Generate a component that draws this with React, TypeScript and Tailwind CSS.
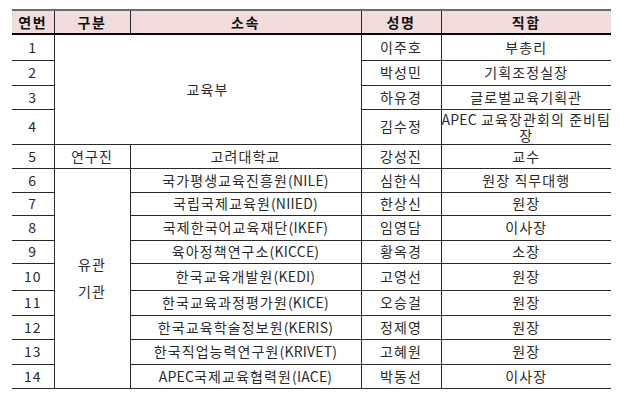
const font = { fontFamily: '"Malgun Gothic", "Noto Sans CJK KR", "Noto Sans", sans-serif' };

// latin pieces keep normal spacing, hangul gets the wide spacing of the source sheet
function T({ s }: { s: string }) {
  return (
    <>
      {s.split(/([A-Za-z()]+)/).map((p, i) =>
        /[A-Za-z()]/.test(p) ? (
          <span key={i} className="tracking-[0.2px]">
            {p}
          </span>
        ) : (
          p
        )
      )}
    </>
  );
}

type Row = { no: number; h: string; name: string; title: React.ReactNode; org?: string };

const rows: Row[] = [
  { no: 1, h: "h-[26px]", name: "이주호", title: "부총리" },
  { no: 2, h: "h-[25px]", name: "박성민", title: "기획조정실장" },
  { no: 3, h: "h-[24px]", name: "하유경", title: "글로벌교육기획관" },
  {
    no: 4,
    h: "h-[35px]",
    name: "김수정",
    title: (
      <div className="flex flex-col items-center whitespace-nowrap">
        <div className="h-[16px] leading-[16px]">
          <T s="APEC 교육장관회의 준비팀" />
        </div>
        <div className="h-[16px] leading-[16px]">장</div>
      </div>
    ),
  },
  { no: 5, h: "h-[24px]", name: "강성진", title: "교수", org: "고려대학교" },
  { no: 6, h: "h-[24px]", name: "심한식", title: "원장 직무대행", org: "국가평생교육진흥원(NILE)" },
  { no: 7, h: "h-[23px]", name: "한상신", title: "원장", org: "국립국제교육원(NIIED)" },
  { no: 8, h: "h-[25px]", name: "임영담", title: "이사장", org: "국제한국어교육재단(IKEF)" },
  { no: 9, h: "h-[23px]", name: "황옥경", title: "소장", org: "육아정책연구소(KICCE)" },
  { no: 10, h: "h-[27px]", name: "고영선", title: "원장", org: "한국교육개발원(KEDI)" },
  { no: 11, h: "h-[25px]", name: "오승걸", title: "원장", org: "한국교육과정평가원(KICE)" },
  { no: 12, h: "h-[24px]", name: "정제영", title: "원장", org: "한국교육학술정보원(KERIS)" },
  { no: 13, h: "h-[25px]", name: "고혜원", title: "원장", org: "한국직업능력연구원(KRIVET)" },
  { no: 14, h: "h-[24px]", name: "박동선", title: "이사장", org: "APEC국제교육협력원(IACE)" },
];

const cell = "border-b border-[#2a2a2a] text-center align-middle p-0";
const vline = "border-l border-[#2a2a2a]";
const head = "border-t-2 border-b-2 border-t-[#6b6b6b] border-b-black text-center p-0";

export default function App() {
  return (
    <div className="w-[620px] h-[404px] bg-white pl-[12px] pt-[9px]" style={font}>
      <table className="table-fixed border-collapse w-[599px] text-[14px] leading-[15px] tracking-[1.1px] text-[#2b2b2b]">
        <colgroup>
          <col className="w-[42px]" />
          <col className="w-[76px]" />
          <col className="w-[231px]" />
          <col className="w-[80px]" />
          <col className="w-[170px]" />
        </colgroup>
        <thead>
          <tr className="h-[24px] bg-[#f2dcdb] font-bold text-[#111] text-[14px] tracking-[1.5px]">
            <th className={head}>연번</th>
            <th className={`${head} ${vline}`}>구분</th>
            <th className={`${head} ${vline}`}>소속</th>
            <th className={`${head} ${vline}`}>성명</th>
            <th className={`${head} ${vline}`}>직함</th>
          </tr>
        </thead>
        <tbody>
          {rows.map((r) => (
            <tr key={r.no} className={r.h}>
              <td className={`${cell} tracking-[1px]`}>{r.no}</td>
              {r.no === 1 && (
                <td className={`${cell} ${vline}`} colSpan={2} rowSpan={4}>
                  교육부
                </td>
              )}
              {r.no === 5 && <td className={`${cell} ${vline}`}>연구진</td>}
              {r.no === 6 && (
                <td className={`${cell} ${vline} leading-[27px]`} rowSpan={9}>
                  유관
                  <br />
                  기관
                </td>
              )}
              {r.org && (
                <td className={`${cell} ${vline}`}>
                  <T s={r.org} />
                </td>
              )}
              <td className={`${cell} ${vline}`}>{r.name}</td>
              <td className={`${cell} ${vline}`}>{r.title}</td>
            </tr>
          ))}
        </tbody>
      </table>
    </div>
  );
}
